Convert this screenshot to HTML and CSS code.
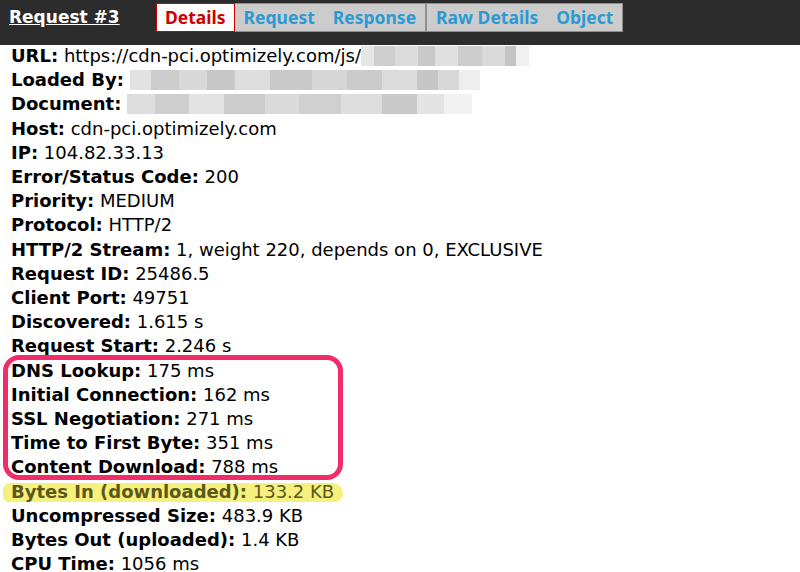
FILE: index.html
```html
<!DOCTYPE html>
<html lang="en">
<head>
    <meta charset="UTF-8">
    <title>Request #3 - Details</title>
    <link rel="stylesheet" href="styles.css">
</head>
<body>

    <header class="topbar">
        <a class="req-title" href="#">Request #3</a>
        <nav class="tabs">
            <span class="tab tab-active">Details</span>
            <span class="tab-group">
                <span class="tab">Request</span>
                <span class="tab">Response</span>
            </span>
            <span class="tab-group">
                <span class="tab">Raw Details</span>
                <span class="tab">Object</span>
            </span>
        </nav>
    </header>

    <main class="details">
        <div class="row"><b>URL:</b> https://cdn-pci.optimizely.com/js/<span class="blur blur-url"></span></div>
        <div class="row"><b>Loaded By:</b> <span class="blur blur-long"></span></div>
        <div class="row"><b>Document:</b> <span class="blur blur-doc"></span></div>
        <div class="row"><b>Host:</b> cdn-pci.optimizely.com</div>
        <div class="row"><b>IP:</b> 104.82.33.13</div>
        <div class="row"><b>Error/Status Code:</b> 200</div>
        <div class="row"><b>Priority:</b> MEDIUM</div>
        <div class="row"><b>Protocol:</b> HTTP/2</div>
        <div class="row"><b>HTTP/2 Stream:</b> 1, weight 220, depends on 0, EXCLUSIVE</div>
        <div class="row"><b>Request ID:</b> 25486.5</div>
        <div class="row"><b>Client Port:</b> 49751</div>
        <div class="row"><b>Discovered:</b> 1.615 s</div>
        <div class="row"><b>Request Start:</b> 2.246 s</div>

        <!-- connection timings, circled -->
        <div class="callout">
            <div class="row"><b>DNS Lookup:</b> 175 ms</div>
            <div class="row"><b>Initial Connection:</b> 162 ms</div>
            <div class="row"><b>SSL Negotiation:</b> 271 ms</div>
            <div class="row"><b>Time to First Byte:</b> 351 ms</div>
            <div class="row"><b>Content Download:</b> 788 ms</div>
        </div>

        <div class="row highlight"><b>Bytes In (downloaded):</b> 133.2 KB</div>
        <div class="row"><b>Uncompressed Size:</b> 483.9 KB</div>
        <div class="row"><b>Bytes Out (uploaded):</b> 1.4 KB</div>
        <div class="row"><b>CPU Time:</b> 1056 ms</div>
    </main>

</body>
</html>
```

FILE: styles.css
```css
/* --- Theme --- */
:root {
    --bar-bg: #2c2c2c;
    --tab-bg: #cccccc;
    --tab-border: #8f8f8f;
    --tab-text: #2b9ad3;
    --active-red: #cc0000;
    --text: #000000;
    --callout: #f02d69;
    --marker: #f6f07c;
}

*, *::before {
    box-sizing: border-box;
    margin: 0;
    padding: 0;
}

body {
    font-family: "DejaVu Sans", Verdana, sans-serif;
    color: var(--text);
    background: #ffffff;
}

/* --- Top bar --- */
.topbar {
    height: 45px;
    background: var(--bar-bg);
    display: flex;
    align-items: flex-start;
    padding: 3px 0 0 9px;
}

.req-title {
    color: #ffffff;
    font-weight: 700;
    font-size: 17px;
    line-height: 29px;
    text-decoration: underline;
    width: 147px;
}

.tabs {
    display: flex;
    height: 29px;
}

.tab-group {
    display: flex;
    background: var(--tab-bg);
    border: 1px solid var(--tab-border);
    border-left: none;
}

.tab-group + .tab-group {
    border-left: 1px solid var(--tab-border);
}

.tab {
    display: block;
    padding: 0 9px;
    font-family: "Noto Sans", "DejaVu Sans", sans-serif;
    font-size: 17.5px;
    font-weight: 700;
    line-height: 27px;
    color: var(--tab-text);
}

.tab-active {
    background: #ffffff;
    color: var(--active-red);
    border: 1px solid var(--active-red);
    padding: 0 8px;
}

/* --- Details list --- */
.details {
    margin-top: -1px;
    padding-left: 11px;
    font-size: 18px;
    line-height: 24.2px;
}

.row {
    white-space: nowrap;
}

.blur {
    display: inline-block;
    height: 20px;
    vertical-align: -4px;
}

.blur-url {
    width: 168px;
    background: linear-gradient(90deg,
        #e6e6e6 0 8%, #cfcfcf 8% 20%, #dcdcdc 20% 34%, #c9c9c9 34% 44%,
        #e0e0e0 44% 58%, #cdcdcd 58% 72%, #dadada 72% 86%, #c4c4c4 86% 92%, #f0f0f0 92%);
}

.blur-long {
    width: 350px;
    background: linear-gradient(90deg,
        #e2e2e2 0 6%, #cdcdcd 6% 14%, #d9d9d9 14% 22%, #c8c8c8 22% 30%,
        #dedede 30% 40%, #cacaca 40% 52%, #d6d6d6 52% 62%, #cbcbcb 62% 72%,
        #dcdcdc 72% 82%, #c6c6c6 82% 88%, #d8d8d8 88% 94%, #eeeeee 94%);
}

.blur-doc {
    width: 345px;
    background: linear-gradient(90deg,
        #dddddd 0 8%, #cfcfcf 8% 18%, #e3e3e3 18% 28%, #cccccc 28% 40%,
        #dadada 40% 50%, #d0d0d0 50% 62%, #dedede 62% 74%, #cacaca 74% 84%,
        #e4e4e4 84% 92%, #f2f2f2 92%);
}

/* --- Annotations --- */
.callout {
    position: relative;
}

.callout::before {
    content: "";
    position: absolute;
    left: -8px;
    width: 340px;
    top: -4px;
    bottom: 0;
    border: 5px solid var(--callout);
    border-radius: 16px;
}

.highlight {
    position: relative;
    color: #5a581c;
    z-index: 0;
}

.highlight::before {
    content: "";
    position: absolute;
    left: -8px;
    width: 340px;
    top: 3px;
    bottom: 2px;
    background: var(--marker);
    border-radius: 8px 12px 10px 6px;
    z-index: -1;
}
```
